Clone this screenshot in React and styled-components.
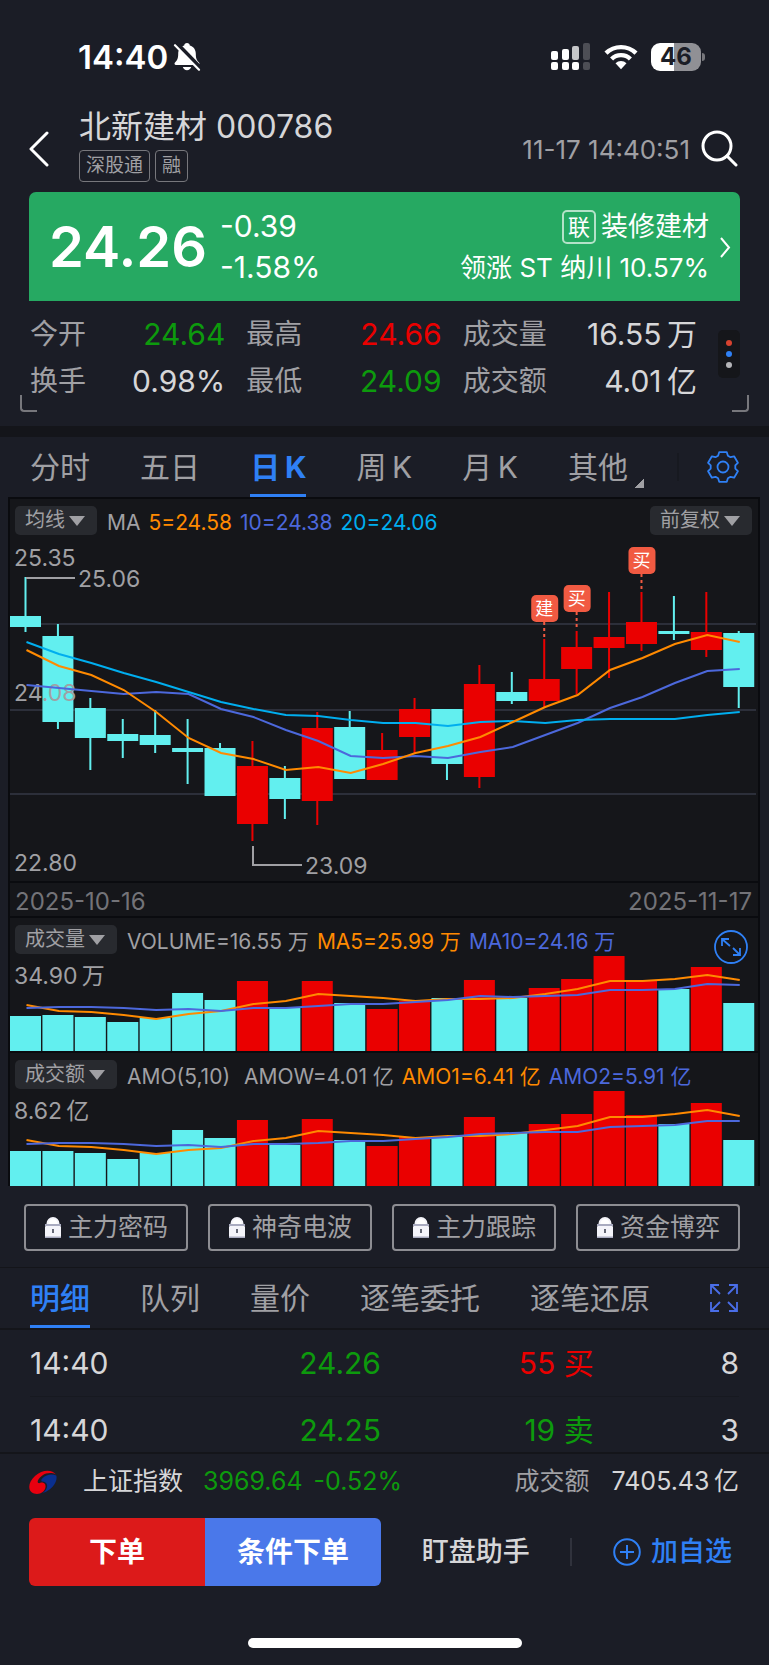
import React from 'react'
import styled, { createGlobalStyle, css } from 'styled-components'

const colors = {
  bg: '#1b1d26',
  panel: '#15161a',
  line: '#14151a',
  text: '#d6d6d8',
  muted: '#a0a0a4',
  dim: '#737378',
  blue: '#2f80f5',
  red: '#ea0000',
  green: '#0d9a0d',
  cyan: '#62efef',
  ma5: '#ff8a00',
  ma10: '#4c68dc',
  ma20: '#00aeef',
}

// x step between two candles and width of one body
const STEP = 32.42
const BODY = 31
const CHART_WIDTH = 748

// colour, high, body top, body bottom, low (measured down from the top of the chart)
const candles = [
  ['c', 37, 76, 87, 92],
  ['c', 84, 96, 182, 189],
  ['c', 158, 168, 198, 230],
  ['c', 179, 194, 201, 218],
  ['c', 170, 195, 205, 213],
  ['c', 179, 208, 212, 244],
  ['c', 203, 208, 256, 256],
  ['r', 201, 226, 284, 301],
  ['c', 226, 238, 259, 279],
  ['r', 172, 188, 261, 285],
  ['c', 171, 187, 239, 239],
  ['r', 193, 210, 240, 240],
  ['r', 158, 169, 197, 213],
  ['c', 169, 169, 224, 240],
  ['r', 125, 144, 237, 248],
  ['c', 132, 152, 161, 164],
  ['r', 99, 139, 161, 167],
  ['r', 91, 107, 129, 154],
  ['r', 52, 97, 108, 138],
  ['r', 52, 82, 104, 111],
  ['c', 56, 91, 94, 100],
  ['r', 52, 92, 110, 117],
  ['c', 91, 93, 147, 168],
]

const priceLines = {
  ma10: [145, 148, 151, 154, 152, 154, 169, 177, 190, 201, 216, 218, 216, 218, 212, 207, 195, 183, 168, 157, 143, 131, 129],
  ma20: [102, 114, 123, 133, 142, 152, 162, 169, 175, 176, 180, 183, 183, 186, 182, 181, 183, 180, 179, 179, 179, 175, 172],
  ma5: [110, 126, 135, 150, 172, 198, 213, 219, 230, 227, 233, 224, 213, 206, 197, 182, 167, 155, 130, 118, 104, 95, 102],
}

const marks = [
  { index: 16, label: '建', top: 55, end: 98 },
  { index: 17, label: '买', top: 45, end: 89 },
  { index: 19, label: '买', top: 7, end: 50 },
]

const volume = {
  max: '34.90\u2009万',
  bars: [35, 36, 34, 29, 33, 58, 51, 70, 43, 70, 48, 42, 50, 53, 71, 53, 63, 72, 95, 71, 62, 84, 48],
  ma5: [46, 40, 39, 36, 32, 37, 40, 47, 50, 57, 55, 53, 50, 52, 52, 53, 57, 62, 70, 70, 72, 76, 71],
  ma10: [43, 44, 44, 43, 41, 42, 40, 43, 43, 45, 47, 47, 49, 51, 55, 54, 55, 56, 61, 61, 62, 67, 66],
}

const amount = {
  max: '8.62\u2009亿',
  bars: [35, 35, 33, 27, 33, 56, 48, 66, 41, 67, 46, 40, 49, 50, 69, 53, 62, 72, 95, 71, 62, 83, 46],
  ma5: [46, 40, 39, 36, 32, 36, 38, 45, 48, 55, 53, 51, 48, 50, 50, 52, 56, 60, 69, 69, 72, 76, 70],
  ma10: [42, 43, 43, 42, 40, 41, 39, 42, 42, 43, 45, 45, 47, 49, 52, 53, 54, 54, 59, 60, 61, 65, 65],
}

const quotes = [
  [
    { label: '今开', value: '24.64', tone: 'down' },
    { label: '换手', value: '0.98%' },
  ],
  [
    { label: '最高', value: '24.66', tone: 'up' },
    { label: '最低', value: '24.09', tone: 'down' },
  ],
  [
    { label: '成交量', value: '16.55\u2009万' },
    { label: '成交额', value: '4.01\u2009亿' },
  ],
]

const periods = ['分时', '五日', '日\u2009K', '周\u2009K', '月\u2009K', '其他']
const signals = ['主力密码', '神奇电波', '主力跟踪', '资金博弈']
const detailTabs = ['明细', '队列', '量价', '逐笔委托', '逐笔还原']
const trades = [
  { time: '14:40', price: '24.26', size: '55', side: '买', tone: 'up', count: '8' },
  { time: '14:40', price: '24.25', size: '19', side: '卖', tone: 'down', count: '3' },
]

const centerOf = (i) => 15.5 + i * STEP
const pathOf = (values, toY) => values.map((v, i) => `${i ? 'L' : 'M'}${centerOf(i) + 1} ${toY(v)}`).join('')
const fillOf = (type) => (type === 'r' ? colors.red : colors.cyan)

const CandleChart = () => (
  <Chart viewBox={`0 0 ${CHART_WIDTH} 341`} role="img" aria-label="日K线图">
    {[84, 170, 254].map((y) => (
      <line key={y} x1="0" x2="746" y1={y} y2={y} stroke="#2c2f3a" strokeWidth="2" />
    ))}
    {candles.map(([type, high, top, bottom, low], i) => (
      <g key={i} fill={fillOf(type)}>
        <rect x={centerOf(i) - 1} y={high} width="2" height={low - high} />
        <rect x={centerOf(i) - BODY / 2} y={top} width={BODY} height={bottom - top} />
      </g>
    ))}
    <Label x="4" y="26">25.35</Label>
    <Label x="4" y="161">24.08</Label>
    <Label x="4" y="331">22.80</Label>
    <path d={pathOf(priceLines.ma10, (v) => v)} fill="none" stroke={colors.ma10} strokeWidth="2" />
    <path d={pathOf(priceLines.ma20, (v) => v)} fill="none" stroke={colors.ma20} strokeWidth="2" />
    <path d={pathOf(priceLines.ma5, (v) => v)} fill="none" stroke={colors.ma5} strokeWidth="2" />
    <path d="M16 38H65M243 306V325H292" fill="none" stroke={colors.muted} strokeWidth="2" />
    <Label x="68" y="47">25.06</Label>
    <Label x="295" y="334">23.09</Label>
    {marks.map(({ index, label, top, end }) => (
      <g key={index}>
        <line x1={centerOf(index)} x2={centerOf(index)} y1={top + 27} y2={end} stroke="#f15a42" strokeWidth="2" strokeDasharray="3 3" />
        <rect x={centerOf(index) - 13} y={top} width="27" height="27" rx="5" fill="#f15a42" />
        <Mark x={centerOf(index)} y={top + 20}>{label}</Mark>
      </g>
    ))}
  </Chart>
)

const BarChart = ({ data, label }) => (
  <Chart viewBox={`0 0 ${CHART_WIDTH} 97`} role="img" aria-label={label}>
    {data.bars.map((h, i) => (
      <rect key={i} x={centerOf(i) - BODY / 2} y={97 - h} width={BODY} height={h} fill={fillOf(candles[i][0])} />
    ))}
    <Label x="4" y="30">{data.max}</Label>
    <path d={pathOf(data.ma5, (v) => 97 - v)} fill="none" stroke={colors.ma5} strokeWidth="2" />
    <path d={pathOf(data.ma10, (v) => 97 - v)} fill="none" stroke={colors.ma10} strokeWidth="2" />
  </Chart>
)

const SilentBell = () => (
  <svg width="28" height="28" viewBox="0 0 28 28" aria-label="静音">
    <path d="M14 0c1.600 0 2.800 1.100 2.800 2.600 3.900 1.100 6 4.200 6 8.200 0 5 1.200 6.800 3.200 8.700.9.900.6 2.500-1 2.500H3c-1.600 0-1.900-1.600-1-2.500 2-1.900 3.200-3.700 3.200-8.700 0-4 2.100-7.100 6-8.200C11.200 1.100 12.400 0 14 0ZM9.800 24h8.400c-.6 2-2.100 3.200-4.200 3.200S10.400 26 9.800 24Z" fill="#fff" />
    <path d="M3.500.8 27.500 25.500" stroke={colors.bg} strokeWidth="5" />
    <path d="M2 2.200 26 26.700" stroke="#fff" strokeWidth="2.200" strokeLinecap="round" />
  </svg>
)

const SignalIcon = () => (
  <svg width="40" height="28" viewBox="0 0 40 28" aria-label="信号">
    <g fill="#fff">
      <rect x="0" y="8" width="7" height="9" rx="2" />
      <rect x="11" y="6" width="7" height="11" rx="2" />
      <rect x="21" y="3" width="7" height="14" rx="2" opacity=".75" />
      <rect x="32" y="0" width="7" height="17" rx="2" opacity=".22" />
      <rect x="0" y="19" width="7" height="8" rx="2" />
      <rect x="11" y="19" width="7" height="8" rx="2" />
      <rect x="21" y="19" width="7" height="8" rx="2" />
      <rect x="32" y="19" width="7" height="8" rx="2" opacity=".22" />
    </g>
  </svg>
)

const WifiIcon = () => (
  <svg width="34" height="26" viewBox="0 0 34 26" aria-label="无线网络">
    <g fill="none" stroke="#fff" strokeWidth="4.400">
      <path d="M2 9.200a21.500 21.500 0 0 1 30 0" />
      <path d="M7.600 15a13.400 13.400 0 0 1 18.800 0" />
    </g>
    <path d="M11.500 19.200a8 8 0 0 1 11 0L17 25.200Z" fill="#fff" />
  </svg>
)

const BackIcon = () => (
  <svg width="20" height="36" viewBox="0 0 20 36">
    <path d="M18 2 2 18 18 34" fill="none" stroke="#fff" strokeWidth="3" strokeLinecap="round" strokeLinejoin="round" />
  </svg>
)

const SearchIcon = () => (
  <svg width="38" height="38" viewBox="0 0 38 38">
    <circle cx="17" cy="16" r="14" fill="none" stroke="#fff" strokeWidth="3" />
    <path d="m27 26 9 9" stroke="#fff" strokeWidth="3" strokeLinecap="round" />
  </svg>
)

const GearIcon = () => (
  <svg width="32" height="32" viewBox="0 0 32 32" fill="none" stroke={colors.blue} strokeWidth="1.800" strokeLinejoin="round">
    <path d="M12.200 1.200h7.600l1.100 3.500 2.600 1.500 3.600-.9 3.800 6.500-2.600 2.600v3.200l2.600 2.600-3.800 6.500-3.600-.9-2.600 1.500-1.100 3.500h-7.600l-1.100-3.500-2.600-1.500-3.600.9-3.800-6.500 2.600-2.600v-3.200L1.100 11.800l3.800-6.500 3.600.9 2.600-1.500Z" />
    <circle cx="16" cy="16" r="5.500" />
  </svg>
)

const LockIcon = () => (
  <svg width="18" height="22" viewBox="0 0 18 22">
    <path d="M3.500 9V6.500a5.500 5.500 0 0 1 11 0V9" fill="#fff" stroke="#f4f4fa" strokeWidth="2" />
    <rect x="1" y="7" width="16" height="2" fill="#a9abc0" />
    <rect x="1" y="9" width="16" height="12" rx="1" fill="#f4f4fa" />
    <rect x="1" y="19.500" width="16" height="1.500" fill="#a9abc0" />
    <path d="M9 12v4" stroke="#555866" strokeWidth="1.800" />
  </svg>
)

const ExpandIcon = () => (
  <svg width="28" height="28" viewBox="0 0 28 28" fill="none" stroke="#4a6ee8" strokeWidth="1.800">
    <path d="M1 10V1h8M1 1l9 9M19 1h8v9M27 1l-9 9M1 18v9h8M1 27l9-9M27 18v9h-8M27 27l-9-9" />
  </svg>
)

const ZoomIcon = () => (
  <svg width="36" height="34" viewBox="0 0 36 34" fill="none" stroke={colors.blue} strokeWidth="1.800">
    <circle cx="18" cy="17" r="16" />
    <path d="M9 16V9h7M9 9l8 7M20 18l7 7M27 18v7h-7" />
  </svg>
)

const PlusIcon = () => (
  <svg width="28" height="28" viewBox="0 0 28 28" fill="none" stroke={colors.blue} strokeWidth="2">
    <circle cx="14" cy="14" r="12.800" />
    <path d="M14 7v14M7 14h14" />
  </svg>
)

const IndexLogo = () => (
  <svg width="28" height="24" viewBox="0 0 28 24">
    <path d="M27 4.500C23-1 13-.5 6 6-1.500 13-1.500 21.500 5 23.500c5.500 1.600 11-1.500 11.500-6.500.3-2.500-.8-4-3-4.400-1.900-.3-2.600 1-4.200.5-1.500-.6-.5-4.600 4-7.600C17.500 2.600 23 2.300 27 4.500Z" fill="#e8000f" />
    <path d="M27.300 5.500C29 11 23.500 20 13.500 23c3.300-2 5-5 4.600-7.700-.4-2.600-2.500-3.800-5.100-3.800-.9-.2-1-1.800.7-3.500C17 4.600 22.700 3.500 27.300 5.500Z" fill="#0a2f8f" />
  </svg>
)

const App = () => (
  <Page>
    <GlobalStyle />
    <StatusBar>
      <Clock>14:40<SilentBell /></Clock>
      <StatusIcons>
        <SignalIcon />
        <WifiIcon />
        <Battery>46</Battery>
      </StatusIcons>
    </StatusBar>

    <Header>
      <IconButton aria-label="返回"><BackIcon /></IconButton>
      <Heading>
        <Title>北新建材 000786</Title>
        <Tags>
          <Tag>深股通</Tag>
          <Tag>融</Tag>
        </Tags>
      </Heading>
      <Timestamp>11-17 14:40:51</Timestamp>
      <IconButton aria-label="搜索"><SearchIcon /></IconButton>
    </Header>

    <PriceCard>
      <Price>24.26</Price>
      <Change>
        <span>-0.39</span>
        <span>-1.58%</span>
      </Change>
      <Sector href="#sector">
        <SectorName><Badge>联</Badge>装修建材</SectorName>
        <span>领涨 ST 纳川 10.57%</span>
      </Sector>
      <svg width="12" height="21" viewBox="0 0 12 21">
        <path d="m2 1 8 9.500L2 20" fill="none" stroke="#fff" strokeWidth="2" />
      </svg>
    </PriceCard>

    <Stats>
      <StatGrid>
        {quotes.map((group) => (
          <StatGroup key={group[0].label}>
            {group.map(({ label, value, tone }) => (
              <Stat key={label}>
                <dt>{label}</dt>
                <StatValue $tone={tone}>{value}</StatValue>
              </Stat>
            ))}
          </StatGroup>
        ))}
      </StatGrid>
      <MoreButton aria-label="更多">
        <Dot $color="#d8422f" />
        <Dot $color="#2f80f5" />
        <Dot $color="#b5b5b8" />
      </MoreButton>
      <Corner $side="left" />
      <Corner $side="right" />
    </Stats>

    <PeriodBar>
      <TabList>
        {periods.map((name, i) => (
          <Tab key={name} $active={i === 2} $bold>
            {name}
            {name === '其他' && <MoreMark />}
          </Tab>
        ))}
      </TabList>
      <PeriodTools>
        <Divider />
        <IconButton aria-label="设置"><GearIcon /></IconButton>
      </PeriodTools>
    </PeriodBar>

    <ChartArea>
      <ChartHead>
        <Pill>均线<Caret /></Pill>
        <Legend>
          <Series>MA</Series>
          <Series $color={colors.ma5}>5=24.58</Series>
          <Series $color={colors.ma10}>10=24.38</Series>
          <Series $color={colors.ma20}>20=24.06</Series>
        </Legend>
        <Pill>前复权<Caret /></Pill>
      </ChartHead>
      <CandleChart />
      <DateRow>
        <span>2025-10-16</span>
        <span>2025-11-17</span>
      </DateRow>
      <SubChart>
        <ChartHead $tight>
          <Pill>成交量<Caret /></Pill>
          <Legend>
            <Series>VOLUME=16.55 万</Series>
            <Series $color={colors.ma5}>MA5=25.99 万</Series>
            <Series $color={colors.ma10}>MA10=24.16 万</Series>
          </Legend>
        </ChartHead>
        <BarChart data={volume} label="成交量" />
        <ZoomButton aria-label="放大"><ZoomIcon /></ZoomButton>
      </SubChart>
      <SubChart>
        <ChartHead $tight>
          <Pill>成交额<Caret /></Pill>
          <Legend>
            <Series>AMO(5,10)</Series>
            <Series>&nbsp;AMOW=4.01 亿</Series>
            <Series $color={colors.ma5}>AMO1=6.41 亿</Series>
            <Series $color={colors.ma10}>AMO2=5.91 亿</Series>
          </Legend>
        </ChartHead>
        <BarChart data={amount} label="成交额" />
      </SubChart>
    </ChartArea>

    <SignalRow>
      {signals.map((name) => (
        <SignalButton key={name}><LockIcon />{name}</SignalButton>
      ))}
    </SignalRow>

    <DetailBar>
      <TabList>
        {detailTabs.map((name, i) => (
          <Tab key={name} $active={i === 0}>{name}</Tab>
        ))}
      </TabList>
      <IconButton aria-label="展开"><ExpandIcon /></IconButton>
    </DetailBar>

    <TradeList>
      <TradeTable>
        <tbody>
          {trades.map(({ time, price, size, side, tone, count }) => (
            <tr key={price}>
              <Cell $width="25%">{time}</Cell>
              <Cell $width="24.5%" $tone="down" $align="right">{price}</Cell>
              <Cell $width="30%" $tone={tone} $align="right">{size} {side}</Cell>
              <Cell $align="right">{count}</Cell>
            </tr>
          ))}
        </tbody>
      </TradeTable>
    </TradeList>

    <IndexBar>
      <IndexLogo />
      <IndexName>上证指数</IndexName>
      <IndexChange>3969.64<span>-0.52%</span></IndexChange>
      <IndexLabel>成交额</IndexLabel>
      <span>{'7405.43\u2009亿'}</span>
    </IndexBar>

    <ActionBar>
      <OrderButtons>
        <OrderButton $color="#dc1a1a">下单</OrderButton>
        <OrderButton $color="#4a78ea">条件下单</OrderButton>
      </OrderButtons>
      <Assistant>盯盘助手</Assistant>
      <Divider $light />
      <AddButton><PlusIcon />加自选</AddButton>
    </ActionBar>
    <HomeBar />
  </Page>
)

export default App

const GlobalStyle = createGlobalStyle`
  * {
    box-sizing: border-box;
  }
  body {
    margin: 0;
    background: ${colors.bg};
    color: ${colors.text};
    font-family: Inter, "Noto Sans CJK SC", sans-serif;
  }
  button {
    margin: 0;
    padding: 0;
    border: 0;
    background: none;
    color: inherit;
    font: inherit;
    cursor: pointer;
  }
  a {
    color: inherit;
    text-decoration: none;
  }
  svg {
    display: block;
    flex: none;
  }
`

const toneColor = ({ $tone }) =>
  $tone === 'up' ? colors.red : $tone === 'down' ? colors.green : colors.text

const Page = styled.div`
  width: 100%;
`

const StatusBar = styled.div`
  display: flex;
  align-items: center;
  justify-content: space-between;
  padding: 36px 68px 28px 78px;
  line-height: 42px;
`

const Clock = styled.div`
  display: flex;
  align-items: center;
  gap: 5px;
  font-size: 33px;
  font-weight: 600;
  color: #fff;
`

const StatusIcons = styled.div`
  display: flex;
  align-items: center;
  gap: 13px;
`

const Battery = styled.div`
  position: relative;
  width: 50px;
  border-radius: 9px;
  background: linear-gradient(to right, #fff 46%, #909095 46%);
  color: ${colors.bg};
  font-size: 24px;
  font-weight: 700;
  line-height: 28px;
  text-align: center;
  &::after {
    content: '';
    position: absolute;
    top: 10px;
    right: -4px;
    width: 3px;
    height: 8px;
    border-radius: 0 3px 3px 0;
    background: #77777c;
  }
`

const IconButton = styled.button`
  display: flex;
  flex: none;
`

const Header = styled.header`
  display: flex;
  align-items: center;
  padding: 0 31px 0 29px;
`

const Heading = styled.div`
  flex: 1;
  padding: 0 0 10px 30px;
`

const Title = styled.h1`
  margin: 0 0 2px;
  font-size: 32px;
  font-weight: 400;
  line-height: 42px;
`

const Tags = styled.div`
  display: flex;
  gap: 5px;
`

const Tag = styled.span`
  padding: 0 6px;
  border: 1px solid #77777c;
  border-radius: 4px;
  font-size: 19px;
  line-height: 30px;
  color: ${colors.muted};
`

const Timestamp = styled.time`
  margin-right: 10px;
  font-size: 26px;
  color: ${colors.muted};
`

const PriceCard = styled.section`
  display: flex;
  align-items: center;
  margin: 0 29px;
  padding: 14px 9px 13px 20px;
  border-radius: 7px 7px 0 0;
  background: #26a962;
  color: #fff;
  line-height: 41px;
`

const Price = styled.strong`
  font-size: 56px;
  font-weight: 600;
`

const Change = styled.div`
  display: flex;
  flex: 1;
  flex-direction: column;
  padding-left: 13px;
  font-size: 30px;
`

const Sector = styled.a`
  display: flex;
  flex-direction: column;
  align-items: flex-end;
  margin-right: 10px;
  font-size: 26px;
`

const SectorName = styled.span`
  display: flex;
  align-items: center;
  gap: 5px;
  font-size: 27px;
`

const Badge = styled.span`
  padding: 0 4px;
  border: 2px solid #b4e2c8;
  border-radius: 5px;
  font-size: 22px;
  line-height: 30px;
`

const Stats = styled.section`
  position: relative;
  display: flex;
  align-items: center;
  gap: 21px;
  padding: 10px 29px 21px 30px;
`

const StatGrid = styled.div`
  display: grid;
  flex: 1;
  grid-template-columns: 195fr 195fr 234fr;
  gap: 21px;
`

const StatGroup = styled.dl`
  margin: 0;
`

const Stat = styled.div`
  display: flex;
  justify-content: space-between;
  font-size: 28px;
  line-height: 47px;
  color: ${colors.muted};
`

const StatValue = styled.dd`
  margin: 0;
  font-size: 30px;
  color: ${toneColor};
`

const MoreButton = styled.button`
  display: flex;
  flex-direction: column;
  align-items: center;
  gap: 5px;
  margin-bottom: 9px;
  padding: 10px 8px;
  border-radius: 5px;
  background: #15161a;
`

const Dot = styled.span`
  width: 6px;
  height: 6px;
  border-radius: 50%;
  background: ${({ $color }) => $color};
`

const Corner = styled.span`
  position: absolute;
  bottom: 14px;
  width: 17px;
  height: 17px;
  border: solid #77777c;
  ${({ $side }) =>
    $side === 'left'
      ? css`
          left: 20px;
          border-width: 0 0 2px 2px;
          border-radius: 0 0 0 4px;
        `
      : css`
          right: 20px;
          border-width: 0 2px 2px 0;
          border-radius: 0 0 4px 0;
        `}
`

const PeriodBar = styled.div`
  display: flex;
  padding: 0 30px;
  border-top: 11px solid ${colors.line};
`

const TabList = styled.nav`
  display: flex;
  flex: 1;
  justify-content: space-between;
`

const PeriodTools = styled.div`
  display: flex;
  align-items: center;
  justify-content: space-between;
  width: 111px;
  padding-left: 49px;
`

const Tab = styled.button`
  position: relative;
  padding-top: 3px;
  border-bottom: 3px solid transparent;
  font-size: 30px;
  line-height: 54px;
  color: ${colors.muted};
  ${({ $active, $bold }) =>
    $active &&
    css`
      border-color: ${colors.blue};
      color: ${colors.blue};
      font-weight: ${$bold ? 700 : 500};
    `}
`

const MoreMark = styled.i`
  position: absolute;
  right: -16px;
  bottom: 6px;
  border: solid transparent;
  border-width: 10px 0 0 10px;
  border-bottom: 0;
  background: linear-gradient(135deg, transparent 50%, ${colors.muted} 50%) border-box;
`

const Divider = styled.span`
  width: 2px;
  height: 28px;
  background: ${({ $light }) => ($light ? '#30323c' : '#171920')};
`

const ChartArea = styled.section`
  margin: 0 9px 0 8px;
  border: solid #0a0b0f;
  border-width: 2px 2px 0;
  background: ${colors.panel};
`

const ChartHead = styled.div`
  display: flex;
  align-items: center;
  justify-content: space-between;
  padding: ${({ $tight }) => ($tight ? '7px 6px 0 5px' : '7px 6px 5px 5px')};
`

const Pill = styled.button`
  display: flex;
  align-items: center;
  gap: 4px;
  padding: 0 12px 0 10px;
  border-radius: 5px;
  background: #282a2f;
  color: ${colors.muted};
  font-size: 20px;
  line-height: 29px;
`

const Caret = styled.i`
  border: solid transparent;
  border-width: 10px 8px 0;
  border-top-color: ${colors.muted};
`

const Legend = styled.div`
  display: flex;
  flex: 1;
  gap: 8px;
  padding: 5px 0 0 10px;
  font-size: 21px;
  line-height: 24px;
  white-space: nowrap;
`

const Series = styled.span`
  color: ${({ $color }) => $color || colors.muted};
`

const Chart = styled.svg`
  width: 100%;
  height: auto;
`

const Label = styled.text`
  font-size: 23px;
  fill: ${colors.muted};
`

const Mark = styled.text`
  font-size: 18px;
  fill: #fff;
  text-anchor: middle;
`

const DateRow = styled.div`
  display: flex;
  justify-content: space-between;
  padding: 5px 6px 0 5px;
  border-top: 2px solid #0a0b0f;
  font-size: 24px;
  line-height: 28px;
  color: ${colors.dim};
`

const SubChart = styled.div`
  position: relative;
  border-top: 2px solid #0a0b0f;
`

const ZoomButton = styled.button`
  position: absolute;
  top: 12px;
  right: 9px;
`

const SignalRow = styled.div`
  display: grid;
  grid-template-columns: repeat(4, 1fr);
  gap: 20px;
  padding: 18px 29px 16px 24px;
`

const SignalButton = styled.button`
  display: flex;
  align-items: center;
  justify-content: center;
  gap: 6px;
  border: 2px solid #8d8d92;
  border-radius: 4px;
  color: ${colors.muted};
  font-size: 25px;
  line-height: 43px;
`

const DetailBar = styled.div`
  display: flex;
  align-items: center;
  gap: 60px;
  padding: 0 31px 0 30px;
  border: solid ${colors.line};
  border-width: 1px 0 2px;
`

const TradeList = styled.div`
  height: 124px;
  overflow: hidden;
  border-bottom: 2px solid ${colors.line};
`

const TradeTable = styled.table`
  width: 100%;
  padding: 0 30px;
  border-spacing: 0;
`

const Cell = styled.td`
  width: ${({ $width }) => $width};
  padding: 0;
  border-bottom: 1px solid #171920;
  font-size: 30px;
  line-height: 66px;
  text-align: ${({ $align }) => $align || 'left'};
  color: ${toneColor};
`

const IndexBar = styled.section`
  display: flex;
  align-items: center;
  padding: 0 30px 0 29px;
  font-size: 25px;
  line-height: 55px;
`

const IndexName = styled.span`
  margin: 0 20px 0 26px;
`

const IndexChange = styled.span`
  display: flex;
  flex: 1;
  gap: 11px;
  color: ${colors.green};
`

const IndexLabel = styled.span`
  margin-right: 22px;
  color: ${colors.muted};
`

const ActionBar = styled.footer`
  display: flex;
  align-items: center;
  justify-content: space-between;
  padding: 9px 37px 52px 29px;
  font-size: 27px;
  line-height: 68px;
`

const OrderButtons = styled.div`
  display: grid;
  grid-template-columns: 1fr 1fr;
  width: 352px;
  overflow: hidden;
  border-radius: 6px;
`

const OrderButton = styled.button`
  background: ${({ $color }) => $color};
  color: #fff;
  font-size: 28px;
  font-weight: 700;
`

const Assistant = styled.button`
  font-weight: 500;
`

const AddButton = styled.button`
  display: flex;
  align-items: center;
  gap: 10px;
  color: ${colors.blue};
  font-weight: 500;
`

const HomeBar = styled.div`
  width: 274px;
  height: 10px;
  margin: 0 auto 16px;
  border-radius: 5px;
  background: #fff;
`
